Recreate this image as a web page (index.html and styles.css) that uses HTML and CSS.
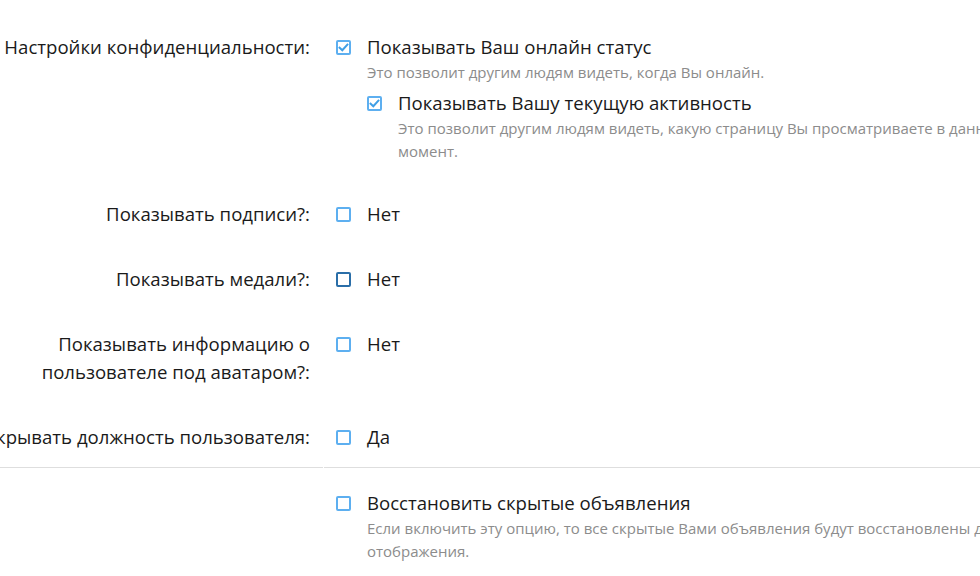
FILE: index.html
```html
<!DOCTYPE html>
<html lang="ru">
<head>
<meta charset="utf-8">
<title>Настройки</title>
<link rel="stylesheet" href="styles.css">
</head>
<body>
<div class="form">
  <div class="row">
    <div class="label">Настройки конфиденциальности:</div>
    <div class="ctrl">
      <div class="opt">
        <span class="cb"><svg class="tick" viewBox="0 0 11 11" width="11" height="11"><path d="M1.6 5.6 L4.3 8.2 L9.4 2.6"/></svg></span>
        <div class="opt-body">
          <div class="opt-text">Показывать Ваш онлайн статус</div>
          <div class="hint">Это позволит другим людям видеть, когда Вы онлайн.</div>
          <div class="opt opt--nested">
            <span class="cb"><svg class="tick" viewBox="0 0 11 11" width="11" height="11"><path d="M1.6 5.6 L4.3 8.2 L9.4 2.6"/></svg></span>
            <div class="opt-body">
              <div class="opt-text">Показывать Вашу текущую активность</div>
              <div class="hint">Это позволит другим людям видеть, какую страницу Вы просматриваете в данный момент.</div>
            </div>
          </div>
        </div>
      </div>
    </div>
  </div>

  <div class="row">
    <div class="label">Показывать подписи?:</div>
    <div class="ctrl">
      <div class="opt"><span class="cb"></span><div class="opt-body"><div class="opt-text">Нет</div></div></div>
    </div>
  </div>

  <div class="row">
    <div class="label">Показывать медали?:</div>
    <div class="ctrl">
      <div class="opt"><span class="cb cb--hover"></span><div class="opt-body"><div class="opt-text">Нет</div></div></div>
    </div>
  </div>

  <div class="row">
    <div class="label">Показывать информацию о пользователе под аватаром?:</div>
    <div class="ctrl">
      <div class="opt"><span class="cb"></span><div class="opt-body"><div class="opt-text">Нет</div></div></div>
    </div>
  </div>

  <div class="row row--last">
    <div class="label">Скрывать должность пользователя:</div>
    <div class="ctrl">
      <div class="opt"><span class="cb"></span><div class="opt-body"><div class="opt-text">Да</div></div></div>
    </div>
  </div>

  <div class="row row--sep">
    <div class="label"></div>
    <div class="ctrl">
      <div class="opt">
        <span class="cb"></span>
        <div class="opt-body">
          <div class="opt-text">Восстановить скрытые объявления</div>
          <div class="hint">Если включить эту опцию, то все скрытые Вами объявления будут восстановлены для отображения.</div>
        </div>
      </div>
    </div>
  </div>
</div>
</body>
</html>
```

FILE: styles.css
```css
html, body {
  margin: 0;
  background: #ffffff;
  overflow: hidden;
}

body {
  font-family: "Segoe UI", "Open Sans", "Noto Sans", sans-serif;
  color: #1a1a1a;
}

.form {
  width: 1086px;
  margin-left: -40px;
  padding-top: 15px;
}

.row {
  display: flex;
  gap: 1px;
}

.label {
  flex: none;
  width: 363px;
  box-sizing: border-box;
  padding: 18px 13px 19px 0;
  text-align: right;
  font-size: 18.6px;
  line-height: 28px;
}

.ctrl {
  flex: 1;
  min-width: 0;
  padding: 18px 12px 19px;
  font-size: 18.6px;
  line-height: 28px;
}

.row--last .label,
.row--last .ctrl {
  padding-bottom: 16px;
}

.row--sep .label,
.row--sep .ctrl {
  border-top: 1px solid #dedede;
  padding-top: 21px;
}

.opt {
  display: flex;
  align-items: flex-start;
}

.opt-body {
  flex: 1;
  min-width: 0;
}

.cb {
  flex: none;
  width: 15px;
  height: 15px;
  box-sizing: border-box;
  border: 2px solid #5daff0;
  border-radius: 2px;
  margin: 7px 16px 0 0;
  display: flex;
  align-items: center;
  justify-content: center;
  background: #fff;
}

.cb--hover {
  border-color: #2a6ea8;
}

.tick {
  display: block;
}

.tick path {
  fill: none;
  stroke: #3f9fe6;
  stroke-width: 2;
  stroke-linecap: square;
}

.hint {
  font-size: 15px;
  line-height: 23px;
  color: #8c8c8c;
}

.opt--nested {
  margin-top: 5px;
}
```
